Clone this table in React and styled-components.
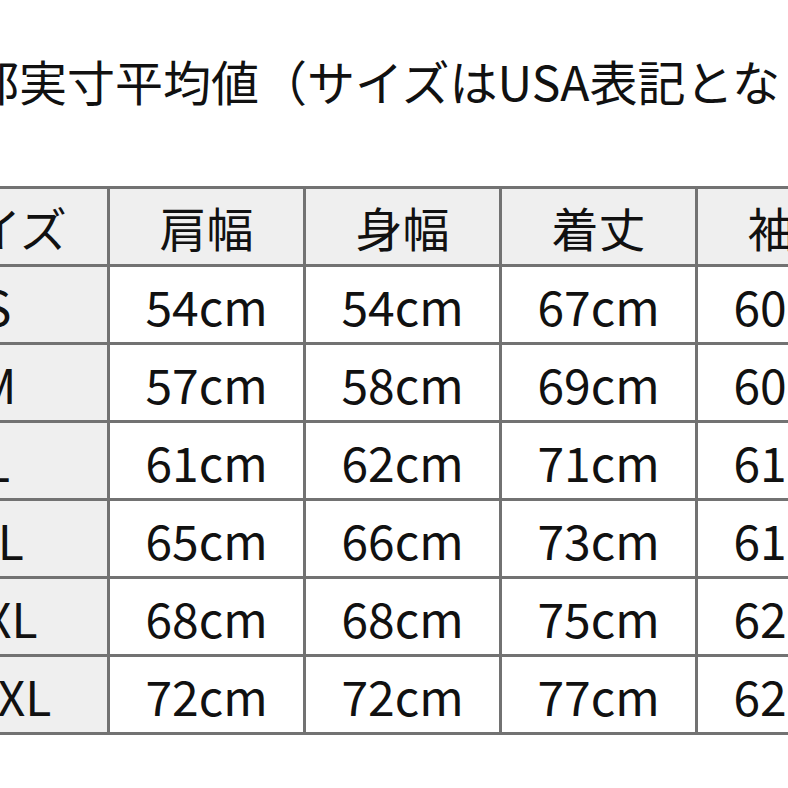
import React from 'react';
import styled, { createGlobalStyle } from 'styled-components';

const GlobalStyle = createGlobalStyle`
  html, body {
    margin: 0;
    padding: 0;
    background: #fff;
    overflow: hidden;
  }
  body {
    width: 788px;
    height: 788px;
    font-family: "Noto Sans CJK JP", "Noto Sans", sans-serif;
    color: #111;
  }
`;

const Page = styled.div`
  width: 788px;
  height: 788px;
  overflow: hidden;
  padding-top: 56px;
  box-sizing: border-box;
`;

const Title = styled.h1`
  margin: 0 0 82px -77px;
  font-size: 48px;
  line-height: 48px;
  font-weight: 400;
  white-space: nowrap;
`;

const Table = styled.div`
  display: grid;
  grid-template-columns: 220px repeat(4, 193px);
  grid-auto-rows: 75px;
  gap: 3px;
  padding: 3px;
  margin-left: -116px;
  width: max-content;
  background: #727272;
`;

const Cell = styled.div`
  display: flex;
  align-items: center;
  justify-content: center;
  background: ${p => (p.$shaded ? '#efefef' : '#fff')};
  font-size: ${p => (p.$head ? '47px' : '48px')};
  line-height: 1;
  white-space: nowrap;
`;

const headers = ['サイズ', '肩幅', '身幅', '着丈', '袖丈'];

const rows = [
  ['S', '54cm', '54cm', '67cm', '60cm'],
  ['M', '57cm', '58cm', '69cm', '60cm'],
  ['L', '61cm', '62cm', '71cm', '61cm'],
  ['XL', '65cm', '66cm', '73cm', '61cm'],
  ['XXL', '68cm', '68cm', '75cm', '62cm'],
  ['XXXL', '72cm', '72cm', '77cm', '62cm'],
];

export default function App() {
  return (
    <Page>
      <GlobalStyle />
      <Title>各部実寸平均値（サイズはUSA表記となります）</Title>
      <Table>
        {headers.map(h => (
          <Cell key={h} $head $shaded>{h}</Cell>
        ))}
        {rows.map(r =>
          r.map((v, i) => (
            <Cell key={r[0] + i} $shaded={i === 0}>{v}</Cell>
          ))
        )}
      </Table>
    </Page>
  );
}
